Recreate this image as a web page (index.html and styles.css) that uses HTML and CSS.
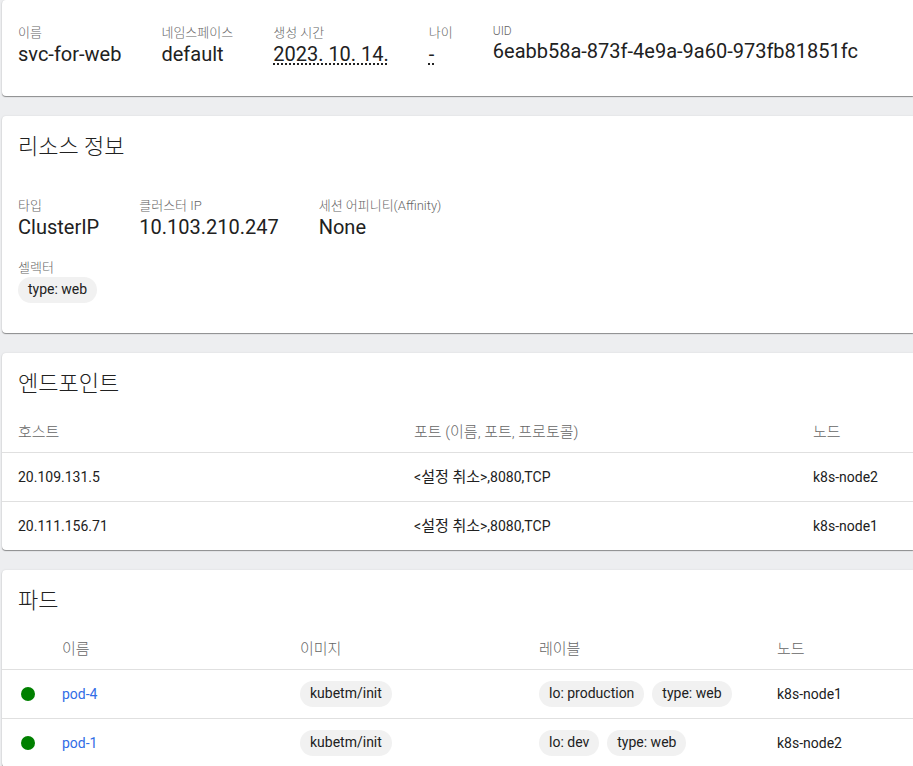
FILE: index.html
```html
<!DOCTYPE html>
<html lang="ko">
<head>
<meta charset="utf-8">
<title>svc-for-web</title>
<link rel="stylesheet" href="styles.css">
</head>
<body>
<main class="page">
  <section class="card card-meta">
    <dl class="props">
      <div class="prop"><dt>이름</dt><dd>svc-for-web</dd></div>
      <div class="prop"><dt>네임스페이스</dt><dd>default</dd></div>
      <div class="prop"><dt>생성 시간</dt><dd><span class="dotted">2023. 10. 14.</span></dd></div>
      <div class="prop"><dt>나이</dt><dd><span class="dotted">-</span></dd></div>
      <div class="prop prop-latin"><dt>UID</dt><dd>6eabb58a-873f-4e9a-9a60-973fb81851fc</dd></div>
    </dl>
  </section>

  <section class="card card-info">
    <h2>리소스 정보</h2>
    <dl class="props">
      <div class="prop"><dt>타입</dt><dd>ClusterIP</dd></div>
      <div class="prop"><dt>클러스터 IP</dt><dd>10.103.210.247</dd></div>
      <div class="prop"><dt>세션 어피니티(Affinity)</dt><dd>None</dd></div>
    </dl>
    <dl class="props props-selector">
      <div class="prop"><dt>셀렉터</dt><dd class="chips"><span class="chip">type: web</span></dd></div>
    </dl>
  </section>

  <section class="card">
    <h2>엔드포인트</h2>
    <table class="endpoints">
      <colgroup><col class="col-host"><col class="col-port"><col></colgroup>
      <thead><tr><th>호스트</th><th>포트 (이름, 포트, 프로토콜)</th><th>노드</th></tr></thead>
      <tbody>
        <tr><td>20.109.131.5</td><td>&lt;<span class="hangul">설정 취소</span>&gt;,8080,TCP</td><td>k8s-node2</td></tr>
        <tr><td>20.111.156.71</td><td>&lt;<span class="hangul">설정 취소</span>&gt;,8080,TCP</td><td>k8s-node1</td></tr>
      </tbody>
    </table>
  </section>

  <section class="card">
    <h2>파드</h2>
    <table class="pods">
      <colgroup><col class="col-status"><col class="col-pod"><col class="col-image"><col class="col-pod"><col></colgroup>
      <thead><tr><th></th><th>이름</th><th>이미지</th><th>레이블</th><th>노드</th></tr></thead>
      <tbody>
        <tr>
          <td><svg class="status" viewBox="0 0 14 14"><circle cx="7" cy="7" r="7"/></svg></td>
          <td><a href="#pod-4">pod-4</a></td>
          <td><div class="chips"><span class="chip">kubetm/init</span></div></td>
          <td><div class="chips"><span class="chip">lo: production</span><span class="chip">type: web</span></div></td>
          <td>k8s-node1</td>
        </tr>
        <tr>
          <td><svg class="status" viewBox="0 0 14 14"><circle cx="7" cy="7" r="7"/></svg></td>
          <td><a href="#pod-1">pod-1</a></td>
          <td><div class="chips"><span class="chip">kubetm/init</span></div></td>
          <td><div class="chips"><span class="chip">lo: dev</span><span class="chip">type: web</span></div></td>
          <td>k8s-node2</td>
        </tr>
      </tbody>
    </table>
  </section>
</main>
</body>
</html>
```
FILE: styles.css
```css
* { box-sizing: border-box; }
body {
  margin: 0;
  background: #edeef0;
  color: #212121;
  font: 14px/20px Roboto, "Noto Sans CJK KR", sans-serif;
  overflow-x: hidden;
}
.page {
  display: flex;
  flex-direction: column;
  gap: 20px;
  padding-left: 2px;
}
.card {
  background: #fff;
  border-radius: 4px 0 0 4px;
  box-shadow: 0 1px 1px rgba(0, 0, 0, .4), 0 0 2px rgba(0, 0, 0, .1);
}
.card-meta { padding: 23px 0 30px; }
.card-info { padding-bottom: 30px; }
h2 {
  margin: 0;
  padding: 17px 16px 0;
  font-size: 22px;
  line-height: 28px;
  font-weight: 300;
}
dl, dd { margin: 0; }
.props { display: flex; gap: 40px; padding: 0 16px; }
.card-info h2 + .props { padding-top: 35px; }
.card-info .props-selector { padding-top: 19px; }
dt { font-size: 13px; line-height: 19px; font-weight: 300; color: #666; }
dd { font-size: 20px; line-height: 24px; }
/* Latin-only labels sit on a shorter line than Hangul ones */
.prop-latin dt { font-size: 12px; line-height: 16px; }
.dotted {
  text-decoration: underline dotted 2px;
  text-underline-offset: 2px;
  text-decoration-skip-ink: none;
}
.hangul { font-size: 15px; }
.chips { display: flex; gap: 8px; font-size: 14px; }
.chip {
  padding: 0 10px 2px;
  border-radius: 13px;
  background: #f1f1f1;
  line-height: 24px;
}
table { width: 100%; border-collapse: collapse; table-layout: fixed; margin-top: 14px; }
th { height: 40px; padding: 0; text-align: left; font-size: 15px; font-weight: 300; color: #666; }
td { height: 49px; padding: 0; border-top: 1px solid #e0e0e0; }
.endpoints th:first-child, .endpoints td:first-child { padding-left: 16px; }
.col-host { width: 412px; }
.col-port { width: 399px; }
.col-status { width: 60px; }
.col-pod { width: 238px; }
.col-image { width: 239px; }
.status { display: block; width: 14px; height: 14px; margin-left: 19px; fill: #008000; }
a { color: #326de6; text-decoration: none; }
```
